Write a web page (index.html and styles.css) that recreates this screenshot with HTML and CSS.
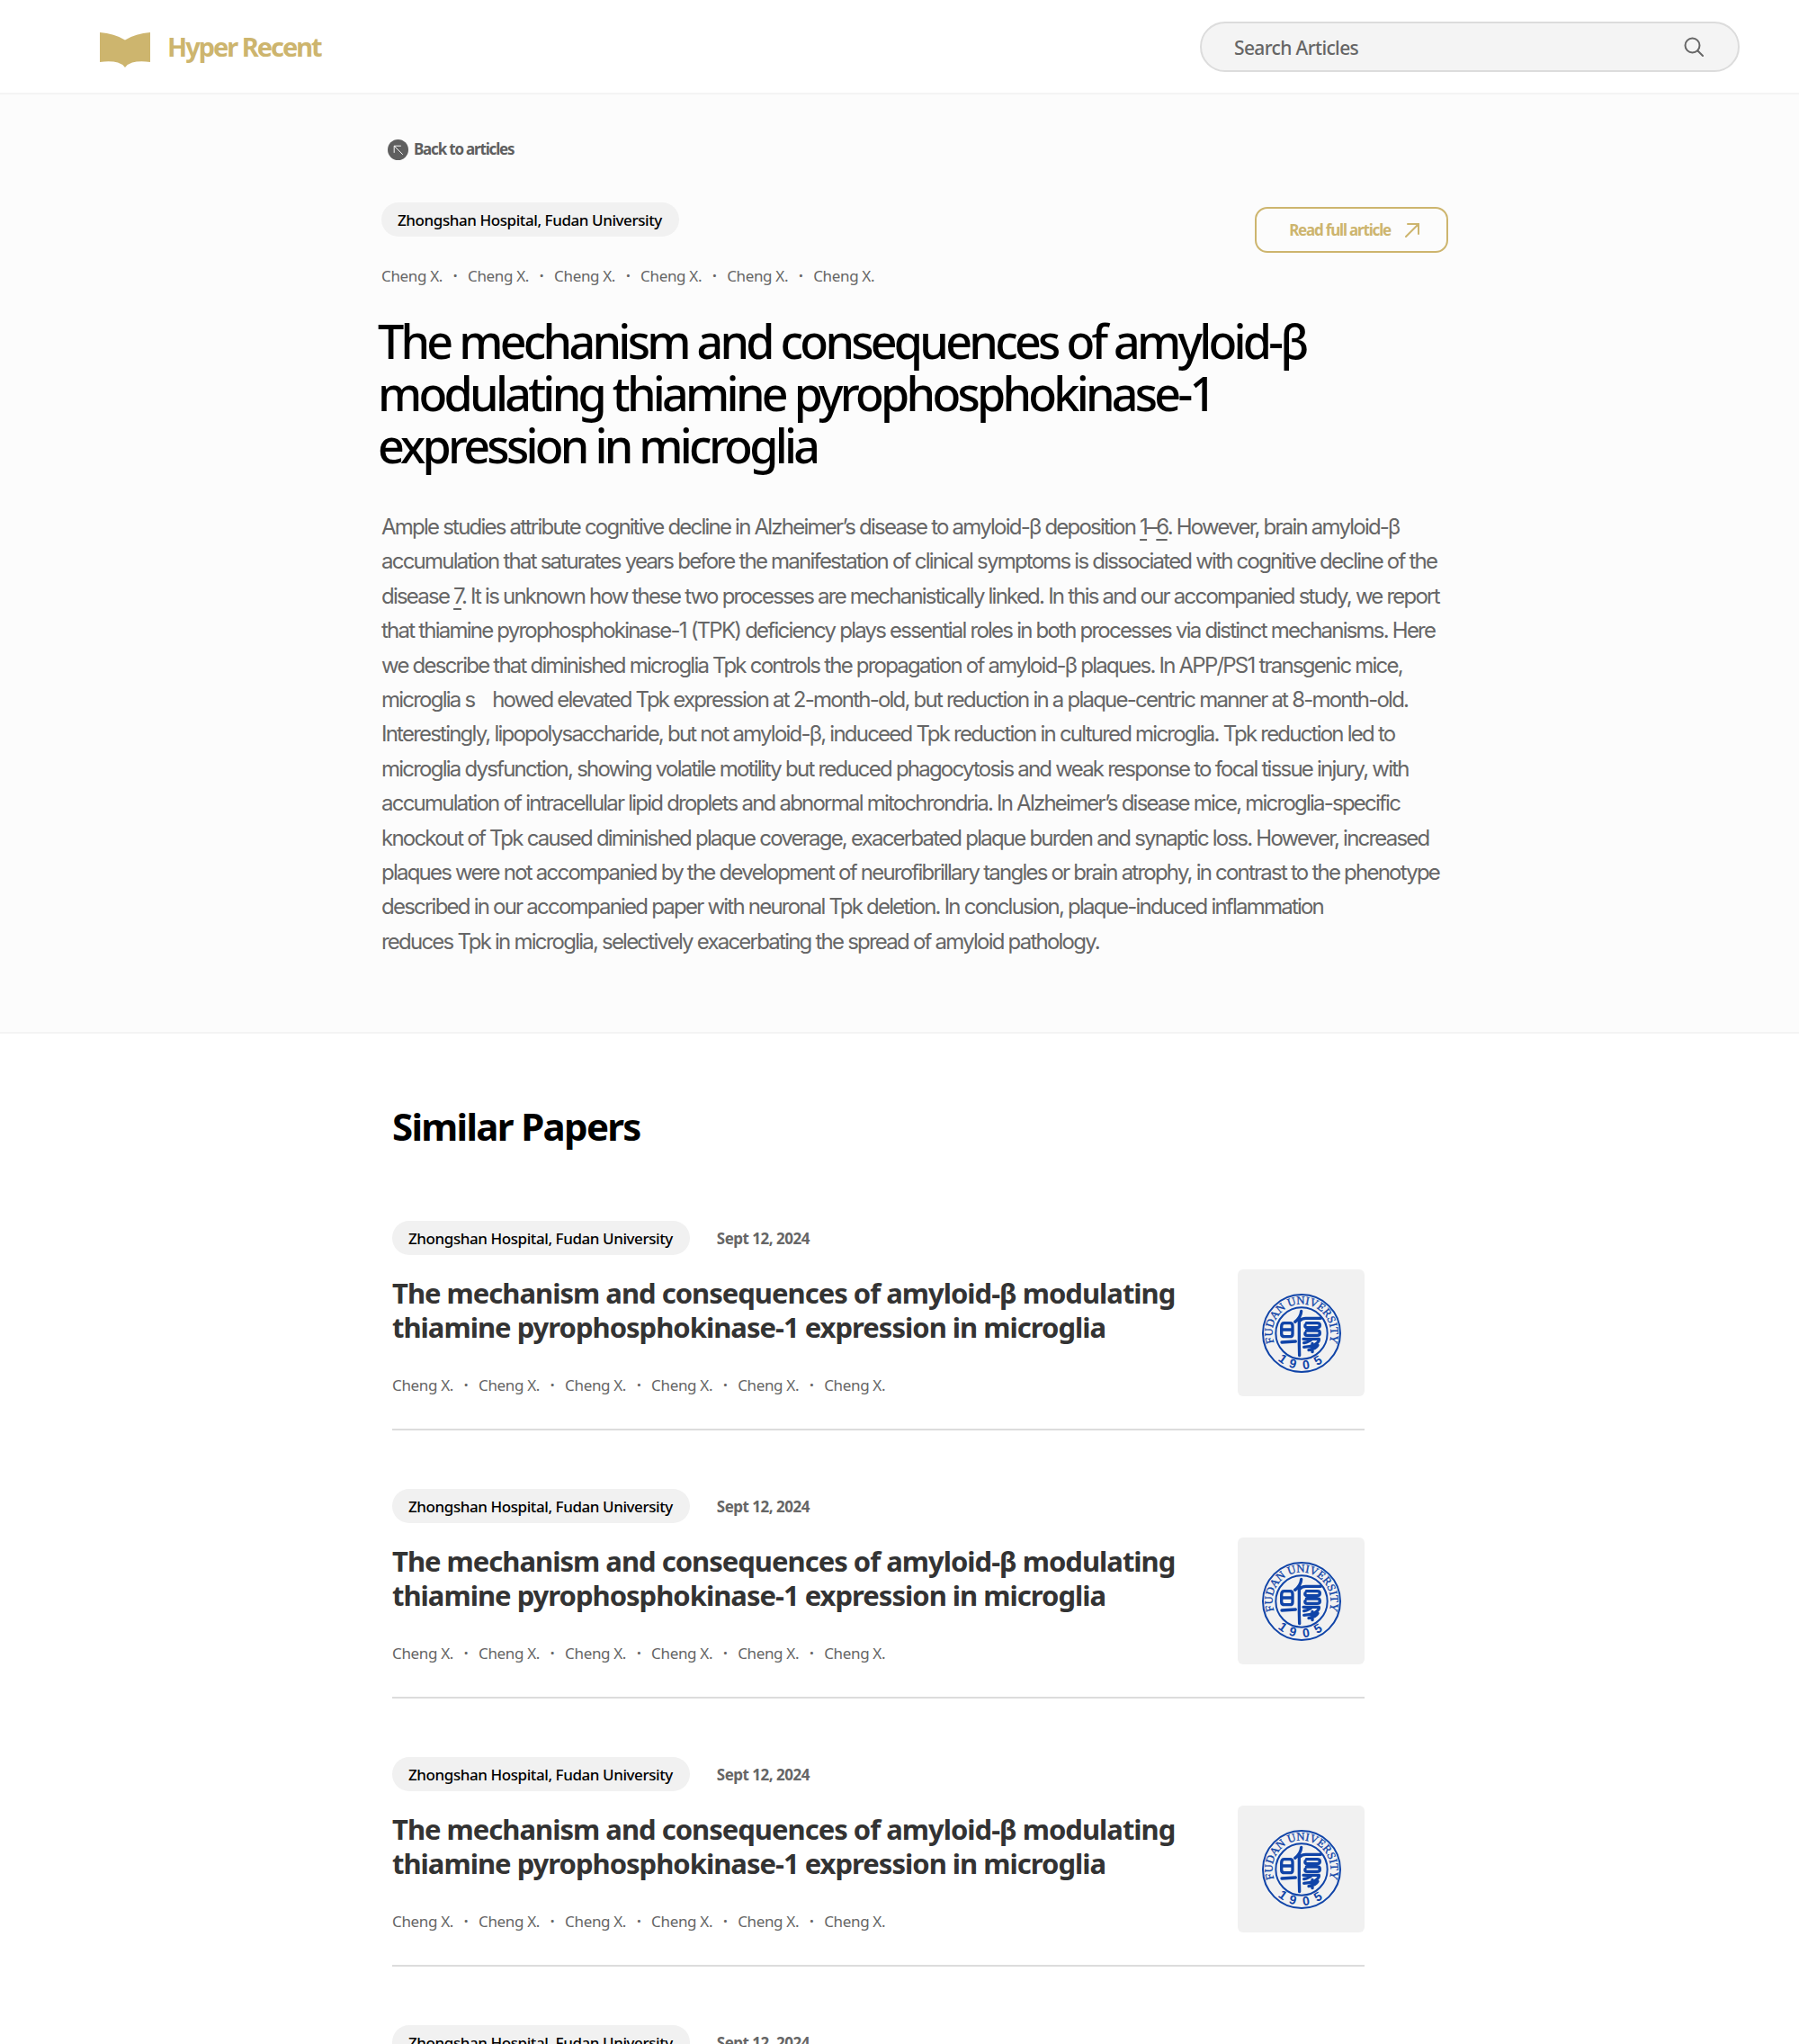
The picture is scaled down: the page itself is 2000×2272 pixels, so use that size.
FILE: index.html
```html
<!DOCTYPE html>
<html lang="en">
<head>
<meta charset="utf-8">
<meta name="viewport" content="width=device-width, initial-scale=1">
<title>Hyper Recent</title>
<link rel="stylesheet" href="styles.css">
</head>
<body>
<svg class="defs" aria-hidden="true">
  <defs>
    <symbol id="seal" viewBox="0 0 264 264">
      <path id="seal-arc" d="M61.8 198.8 A97 97 0 1 1 202.2 198.8" fill="none"/>
      <g fill="none" stroke="currentColor" stroke-width="6">
        <circle cx="132" cy="132" r="129"/>
        <circle cx="132" cy="132" r="86"/>
      </g>
      <g fill="currentColor" stroke="currentColor">
        <text class="seal-name" text-anchor="middle"><textPath href="#seal-arc" startOffset="50%">FUDAN UNIVERSITY</textPath></text>
        <g class="seal-year" text-anchor="middle">
          <text x="132" y="252" transform="rotate(36 132 132)">1</text>
          <text x="132" y="252" transform="rotate(16 132 132)">9</text>
          <text x="132" y="252" transform="rotate(-8 132 132)">0</text>
          <text x="132" y="252" transform="rotate(-31 132 132)">5</text>
        </g>
      </g>
      <g fill="none" stroke="currentColor" stroke-width="10" stroke-linecap="round" stroke-linejoin="round">
        <path d="M72 98 H94 Q102 98 102 108 V134 Q102 143 94 143 H76 Q65 143 65 134 V110 Q65 98 74 98 M66 120 H102 M66 162 L112 159"/>
        <path d="M131 58 Q130 78 110 94 M124 84 V168 L125 206 M126 90 Q134 82 146 82 H196"/>
        <path d="M148 98 H184 Q193 98 193 105 Q193 113 184 113 H150 Q142 113 144 105 M148 123 H184 Q193 123 193 131 Q193 139 184 139 H150 Q142 139 144 131"/>
        <path d="M138 151 H190 Q192 160 176 170 Q160 178 140 178 M166 152 Q158 160 140 164 M168 166 V194 M186 172 Q180 184 156 188"/>
      </g>
    </symbol>
  </defs>
</svg>

<header class="site-header">
  <a class="brand" href="#">
    <svg class="brand-mark" viewBox="0 0 56 45" aria-hidden="true"><path d="M0 6 Q16 7 28 14.500 Q40 7 56 6 V39 Q44 37.500 36 39.500 Q31 41 28 45 Q25 41 20 39.500 Q12 37.500 0 39 Z" fill="currentColor"/></svg>
    <span>Hyper Recent</span>
  </a>
  <form class="search" role="search">
    <input class="search-input" type="search" placeholder="Search Articles" aria-label="Search Articles">
    <button class="search-button" type="submit" aria-label="Search">
      <svg viewBox="0 0 22 22" aria-hidden="true"><circle cx="9.500" cy="9.500" r="8"/><path d="M15.500 15.500 L21 21"/></svg>
    </button>
  </form>
</header>

<main>
  <article class="hero">
    <div class="hero-inner">
      <a class="back" href="#">
        <svg viewBox="0 0 24 24" aria-hidden="true"><circle cx="12" cy="12" r="12" fill="currentColor"/><path d="M15.500 7.500 H7.500 V15.500 M7.500 7.500 L17.500 17.500" fill="none" stroke="#fcfcfc"/></svg>
        <span>Back to articles</span>
      </a>
      <div class="hero-top">
        <div>
          <span class="chip">Zhongshan Hospital, Fudan University</span>
          <ul class="authors"><li>Cheng X.</li><li>Cheng X.</li><li>Cheng X.</li><li>Cheng X.</li><li>Cheng X.</li><li>Cheng X.</li></ul>
        </div>
        <button class="read" type="button">
          <span>Read full article</span>
          <svg viewBox="0 0 16 16" aria-hidden="true"><path d="M3 1 H15 V12 M15 1 L1 15"/></svg>
        </button>
      </div>
      <h1 class="title">The mechanism and consequences of amyloid-β modulating thiamine pyrophosphokinase-1 expression in microglia</h1>
      <p class="abstract">Ample studies attribute cognitive decline in Alzheimer’s disease to amyloid-β deposition <a href="#">1</a>–<a href="#">6</a>. However, brain amyloid-β accumulation that saturates years before the manifestation of clinical symptoms is dissociated with cognitive decline of the disease <a href="#">7</a>. It is unknown how these two processes are mechanistically linked. In this and our accompanied study, we report that thiamine pyrophosphokinase-1 (TPK) deficiency plays essential roles in both processes via distinct mechanisms. Here we describe that diminished microglia Tpk controls the propagation of amyloid-β plaques. In APP/PS1 transgenic mice, microglia s&nbsp;&nbsp;&nbsp; howed elevated Tpk expression at 2-month-old, but reduction in a plaque-centric manner at 8-month-old. Interestingly, lipopolysaccharide, but not amyloid-β, induceed Tpk reduction in cultured microglia. Tpk reduction led to microglia dysfunction, showing volatile motility but reduced phagocytosis and weak response to focal tissue injury, with accumulation of intracellular lipid droplets and abnormal mitochrondria. In Alzheimer’s disease mice, microglia-specific knockout of Tpk caused diminished plaque coverage, exacerbated plaque burden and synaptic loss. However, increased plaques were not accompanied by the development of neurofibrillary tangles or brain atrophy, in contrast to the phenotype described in our accompanied paper with neuronal Tpk deletion. In conclusion, plaque-induced inflammation<br>reduces Tpk in microglia, selectively exacerbating the spread of amyloid pathology.</p>
    </div>
  </article>

  <section class="similar">
    <h2 class="similar-heading">Similar Papers</h2>
    <article class="paper">
      <div class="paper-body">
        <div class="paper-meta"><span class="chip">Zhongshan Hospital, Fudan University</span><time datetime="2024-09-12">Sept 12, 2024</time></div>
        <h3 class="paper-title">The mechanism and consequences of amyloid-β modulating thiamine pyrophosphokinase-1 expression in microglia</h3>
        <ul class="authors"><li>Cheng X.</li><li>Cheng X.</li><li>Cheng X.</li><li>Cheng X.</li><li>Cheng X.</li><li>Cheng X.</li></ul>
      </div>
      <div class="tile"><svg class="seal" role="img" aria-label="Fudan University"><use href="#seal"/></svg></div>
    </article>
    <article class="paper">
      <div class="paper-body">
        <div class="paper-meta"><span class="chip">Zhongshan Hospital, Fudan University</span><time datetime="2024-09-12">Sept 12, 2024</time></div>
        <h3 class="paper-title">The mechanism and consequences of amyloid-β modulating thiamine pyrophosphokinase-1 expression in microglia</h3>
        <ul class="authors"><li>Cheng X.</li><li>Cheng X.</li><li>Cheng X.</li><li>Cheng X.</li><li>Cheng X.</li><li>Cheng X.</li></ul>
      </div>
      <div class="tile"><svg class="seal" role="img" aria-label="Fudan University"><use href="#seal"/></svg></div>
    </article>
    <article class="paper">
      <div class="paper-body">
        <div class="paper-meta"><span class="chip">Zhongshan Hospital, Fudan University</span><time datetime="2024-09-12">Sept 12, 2024</time></div>
        <h3 class="paper-title">The mechanism and consequences of amyloid-β modulating thiamine pyrophosphokinase-1 expression in microglia</h3>
        <ul class="authors"><li>Cheng X.</li><li>Cheng X.</li><li>Cheng X.</li><li>Cheng X.</li><li>Cheng X.</li><li>Cheng X.</li></ul>
      </div>
      <div class="tile"><svg class="seal" role="img" aria-label="Fudan University"><use href="#seal"/></svg></div>
    </article>
    <article class="paper">
      <div class="paper-body">
        <div class="paper-meta"><span class="chip">Zhongshan Hospital, Fudan University</span><time datetime="2024-09-12">Sept 12, 2024</time></div>
      </div>
    </article>
  </section>
</main>
</body>
</html>
```
FILE: styles.css
```css
:root {
  --gold: #cdb56e;
  --grey: #666666;
  --chip: #f1f1f1;
  --line: #dcdcdc;
}

* { box-sizing: border-box; }

body {
  margin: 0;
  height: 100vh;
  overflow: hidden;
  background: #ffffff;
  color: #000000;
  font-family: "Noto Sans", "Open Sans", sans-serif;
  font-size: 17px;
  line-height: 24px;
  letter-spacing: -0.02em;
}

h1, h2, h3, p, ul { margin: 0; padding: 0; }
ul { list-style: none; }
a { color: inherit; text-decoration: none; }
button { font: inherit; color: inherit; background: none; border: 0; padding: 0; cursor: pointer; }

.defs { position: absolute; width: 0; height: 0; }

.site-header {
  display: flex;
  align-items: center;
  justify-content: space-between;
  padding: 24px 66px 23px 111px;
  border-bottom: 2px solid #f4f4f4;
}
.brand {
  display: flex;
  align-items: center;
  gap: 19px;
  color: var(--gold);
  font-size: 29px;
  font-weight: 700;
  line-height: 38px;
  letter-spacing: -0.07em;
}
.brand-mark { width: 56px; height: 45px; }

.search {
  display: flex;
  align-items: center;
  flex: 0 1 600px;
  height: 56px;
  padding: 0 38px 0 36px;
  background: #f4f4f4;
  border: 2px solid var(--line);
  border-radius: 28px;
}
.search-input {
  flex: 1;
  min-width: 0;
  padding: 2px 0 0;
  border: 0;
  outline: 0;
  background: none;
  color: var(--grey);
  font: 500 21px/28px "Noto Sans", sans-serif;
  letter-spacing: -0.03em;
}
.search-input::placeholder { color: var(--grey); opacity: 1; }
.search-button { display: flex; color: var(--grey); }
.search-button svg { width: 22px; height: 22px; fill: none; stroke: currentColor; stroke-width: 2; stroke-linecap: round; }

.hero { background: #fcfcfc; border-bottom: 2px solid #f4f4f4; }
.hero-inner {
  max-width: 1186px;
  margin-left: 424px;
  padding: 49px 0 81px;
}
.back {
  display: flex;
  align-items: center;
  gap: 6px;
  width: fit-content;
  margin-left: 7px;
  color: #5f5f5f;
  font-weight: 700;
  letter-spacing: -0.07em;
}
.back svg { width: 23px; height: 23px; }

.hero-top {
  display: flex;
  justify-content: space-between;
  align-items: flex-start;
  margin: 47px 0 31px;
}
.chip {
  display: inline-block;
  padding: 1px 19px 0 18px;
  border-radius: 19px;
  background: var(--chip);
  font-weight: 500;
  line-height: 37px;
  letter-spacing: -0.025em;
}
.authors { display: flex; color: var(--grey); margin-top: 32px; }
.authors li { display: flex; }
.authors li + li::before { content: "·"; width: 28px; font-weight: 700; text-align: center; }

.read {
  display: flex;
  align-items: center;
  gap: 16px;
  margin-top: 5px;
  padding: 0 30px 0 36px;
  border: 2px solid var(--gold);
  border-radius: 14px;
  color: var(--gold);
  font-weight: 700;
  line-height: 47px;
  letter-spacing: -0.07em;
}
.read svg { width: 16px; height: 16px; fill: none; stroke: currentColor; stroke-width: 2; stroke-linecap: round; }

.title {
  max-width: 1120px;
  margin-left: -4px;
  font-size: 52px;
  font-weight: 500;
  line-height: 58px;
  letter-spacing: -0.072em;
}
.abstract {
  margin-top: 43px;
  color: var(--grey);
  font-family: "Inter", sans-serif;
  font-size: 24px;
  line-height: 1.6;
  letter-spacing: -0.074em;
}
.abstract a { text-decoration: underline; text-underline-offset: 5px; text-decoration-thickness: 2px; }

.similar { max-width: 1081px; margin-left: 436px; padding-top: 79px; }
.similar-heading { margin-bottom: 81px; font-size: 42px; font-weight: 700; line-height: 48px; letter-spacing: -0.04em; }

.paper {
  display: flex;
  align-items: flex-end;
  gap: 56px;
  margin-bottom: 65px;
  padding-bottom: 36px;
  border-bottom: 2px solid var(--line);
}
.paper-body { flex: 1; }
.paper-meta { display: flex; align-items: baseline; gap: 30px; margin-bottom: 23px; }
.paper-meta time { color: var(--grey); font-weight: 700; letter-spacing: -0.03em; }
.paper-title { color: #333333; font-size: 31px; font-weight: 700; line-height: 38px; letter-spacing: -1px; }
.paper .authors { margin-top: 34px; }
.tile {
  display: grid;
  place-items: center;
  flex: none;
  width: 141px;
  height: 141px;
  border-radius: 6px;
  background: var(--chip);
}
.seal { width: 88px; height: 88px; color: #1044a8; letter-spacing: normal; }
.seal-name { font: 38px "Liberation Serif", serif; stroke-width: 1; }
.seal-year { font: 700 42px "Liberation Sans", sans-serif; stroke-width: 0; }
```
